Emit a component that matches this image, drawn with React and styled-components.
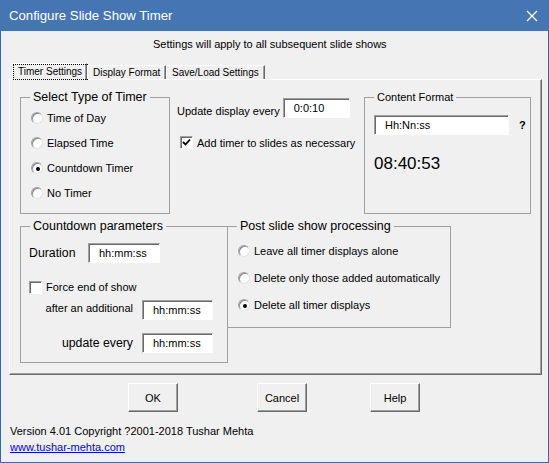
import React from 'react';
import styled, { createGlobalStyle, css } from 'styled-components';

const GlobalStyle = createGlobalStyle`
  html, body {
    margin: 0;
    padding: 0;
    background: #f0f0f0;
  }
  body {
    font-family: "Liberation Sans", Arial, sans-serif;
    font-size: 11px;
    color: #000;
  }
`;

const Window = styled.div`
  width: 549px;
  height: 463px;
  box-sizing: border-box;
  border: 1px solid #2f6db8;
  border-top: none;
  background: #f0f0f0;
  display: flex;
  flex-direction: column;
`;

const TitleBar = styled.div`
  height: 31px;
  margin: 0 -1px;
  padding: 0 11px 0 9px;
  background: #4675b3;
  color: #fff;
  font-size: 13.2px;
  display: flex;
  align-items: center;
  justify-content: space-between;
`;

const Body = styled.div`
  flex: 1;
  padding: 0 6px 0 8px;
  display: flex;
  flex-direction: column;
`;

const Subtitle = styled.div`
  margin-top: 7px;
  padding-left: 144px;
  line-height: 13px;
`;

const TabStrip = styled.div`
  margin-top: 12px;
  padding-left: 3px;
  height: 16px;
  display: flex;
  align-items: flex-end;
  position: relative;
  z-index: 1;
`;

const Tab = styled.div`
  box-sizing: border-box;
  width: ${p => p.$w}px;
  height: ${p => (p.$active ? 17 : 14)}px;
  margin-bottom: ${p => (p.$active ? -1 : 0)}px;
  background: #f0f0f0;
  border-top: 1px solid #fff;
  border-left: 1px solid #fff;
  border-right: 1px solid #696969;
  box-shadow: inset -1px 0 0 #a0a0a0;
  display: flex;
  align-items: center;
  padding-left: ${p => (p.$active ? 1 : 5)}px;
  font-size: 10px;
  line-height: 12px;
  white-space: nowrap;
`;

const FocusText = styled.span`
  outline: 1px dotted #000;
  padding: 1px 5px 1px 4px;
`;

const Panel = styled.div`
  box-sizing: border-box;
  height: 296px;
  background: #f0f0f0;
  border-top: 1px solid #fff;
  border-left: 1px solid #fff;
  border-right: 1px solid #696969;
  border-bottom: 1px solid #696969;
  box-shadow: inset -1px -1px 0 #a0a0a0;
  padding: 10px 0 0 10px;
  display: flex;
  flex-direction: column;
`;

const Row = styled.div`
  display: flex;
  align-items: flex-start;
  margin-top: ${p => p.$mt || 0}px;
`;

const Group = styled.fieldset`
  box-sizing: border-box;
  margin: 0 0 0 ${p => p.$ml || 0}px;
  padding: 0;
  width: ${p => p.$w}px;
  height: ${p => p.$h}px;
  min-width: 0;
  border: 1px solid #a0a0a0;
`;

const Legend = styled.legend`
  margin-left: 9px;
  padding: 0 3px;
  line-height: 15px;
  font-size: ${p => (p.$small ? 11 : 12.5)}px;
`;

const Inner = styled.div`
  padding: ${p => p.$pad};
  display: flex;
  flex-direction: column;
`;

const Stack = styled.div`
  display: flex;
  flex-direction: column;
  gap: ${p => p.$gap}px;
`;

const Option = styled.label`
  height: 18px;
  display: flex;
  align-items: center;
  gap: 4px;
`;

const Radio = styled.span`
  width: 12px;
  height: 12px;
  box-sizing: border-box;
  border-radius: 50%;
  background: #fff;
  border: 1px solid;
  border-color: #a0a0a0 #e3e3e3 #e3e3e3 #a0a0a0;
  box-shadow: inset 1px 1px 0 #8a8a8a;
  display: flex;
  align-items: center;
  justify-content: center;
  flex-shrink: 0;
  ${p => p.$checked && css`
    &::after {
      content: '';
      width: 4px;
      height: 4px;
      border-radius: 50%;
      background: #000;
      margin: 1px 0 0 1px;
    }
  `}
`;

const Box = styled.span`
  width: 13px;
  height: 13px;
  box-sizing: border-box;
  background: #fff;
  border: 1px solid;
  border-color: #a0a0a0 #fff #fff #a0a0a0;
  box-shadow: inset 1px 1px 0 #696969;
  display: flex;
  align-items: center;
  justify-content: center;
  flex-shrink: 0;
`;

const Field = styled.input`
  box-sizing: border-box;
  width: ${p => p.$w}px;
  height: 20px;
  margin: 0;
  padding: 0 0 0 10px;
  font: inherit;
  font-size: 11px;
  color: #000;
  background: #fff;
  border: 1px solid;
  border-color: #a0a0a0 #fff #fff #a0a0a0;
  box-shadow: inset 1px 1px 0 #696969;
  outline: none;
`;

const Middle = styled.div`
  width: 187px;
  margin-left: 7px;
  padding-top: 8px;
  display: flex;
  flex-direction: column;
`;

const UpdateLine = styled.div`
  display: flex;
  align-items: center;
  gap: 3px;
`;

const UpdateLabel = styled.span`
  margin-top: 5px;
`;

const CheckLine = styled.label`
  margin: 18px 0 0 3px;
  display: flex;
  align-items: center;
  gap: 4px;
`;

const FormatLine = styled.div`
  display: flex;
  align-items: center;
  gap: 10px;
`;

const Help = styled.span`
  font-weight: bold;
  font-size: 11px;
`;

const Clock = styled.div`
  margin-top: 19px;
  font-size: 17px;
  line-height: 20px;
`;

const ParamRow = styled.div`
  display: flex;
  align-items: center;
  margin-top: ${p => p.$mt || 0}px;
`;

const ParamLabel = styled.span`
  width: ${p => p.$w}px;
  text-align: ${p => p.$align || 'left'};
  padding-right: ${p => (p.$align === 'right' ? 9 : 0)}px;
  box-sizing: border-box;
  font-size: ${p => (p.$big ? 12.3 : 11)}px;
  margin-top: ${p => p.$lift || 0}px;
`;

const ButtonRow = styled.div`
  display: flex;
  margin-top: 8px;
  padding-left: 119px;
`;

const Button = styled.button`
  box-sizing: border-box;
  width: 50px;
  height: 29px;
  margin: 0 0 0 ${p => p.$ml || 0}px;
  padding: 0;
  font: inherit;
  font-size: 11px;
  color: #000;
  background: #f0f0f0;
  border: 1px solid;
  border-color: #fff #696969 #696969 #fff;
  box-shadow: inset -1px -1px 0 #a0a0a0;
`;

const Footer = styled.div`
  margin-top: 12px;
  padding-left: 1px;
  display: flex;
  flex-direction: column;
  gap: 2px;
  line-height: 14px;
`;

const Link = styled.a`
  color: #0000ff;
  text-decoration: underline;
`;

const CloseIcon = () => (
  <svg width="12" height="12" viewBox="0 0 12 12">
    <path d="M1 1 L11 11 M11 1 L1 11" stroke="#fff" strokeWidth="1.2" fill="none" />
  </svg>
);

const Check = () => (
  <svg width="9" height="9" viewBox="0 0 9 9">
    <path d="M1 4 L3.5 6.5 L8 1.5" stroke="#000" strokeWidth="1.8" fill="none" />
  </svg>
);

export default function App() {
  return (
    <>
      <GlobalStyle />
      <Window>
        <TitleBar>
          <span>Configure Slide Show Timer</span>
          <CloseIcon />
        </TitleBar>
        <Body>
          <Subtitle>Settings will apply to all subsequent slide shows</Subtitle>
          <TabStrip>
            <Tab $w={75} $active><FocusText>Timer Settings</FocusText></Tab>
            <Tab $w={79}>Display Format</Tab>
            <Tab $w={99}>Save/Load Settings</Tab>
          </TabStrip>
          <Panel>
            <Row>
              <Group $w={150} $h={124}>
                <Legend>Select Type of Timer</Legend>
                <Inner $pad="4px 0 0 10px">
                  <Stack $gap={7}>
                    <Option><Radio />Time of Day</Option>
                    <Option><Radio />Elapsed Time</Option>
                    <Option><Radio $checked />Countdown Timer</Option>
                    <Option><Radio />No Timer</Option>
                  </Stack>
                </Inner>
              </Group>
              <Middle>
                <UpdateLine>
                  <UpdateLabel>Update display every</UpdateLabel>
                  <Field $w={67} readOnly defaultValue="0:0:10" />
                </UpdateLine>
                <CheckLine>
                  <Box><Check /></Box>
                  Add timer to slides as necessary
                </CheckLine>
              </Middle>
              <Group $w={167} $h={124}>
                <Legend $small>Content Format</Legend>
                <Inner $pad="10px 0 0 9px">
                  <FormatLine>
                    <Field $w={135} readOnly defaultValue="Hh:Nn:ss" />
                    <Help>?</Help>
                  </FormatLine>
                  <Clock>08:40:53</Clock>
                </Inner>
              </Group>
            </Row>
            <Row $mt={5}>
              <Group $w={208} $h={144}>
                <Legend>Countdown parameters</Legend>
                <Inner $pad="9px 0 0 8px">
                  <ParamRow>
                    <ParamLabel $w={59} $big>Duration</ParamLabel>
                    <Field $w={72} readOnly defaultValue="hh:mm:ss" />
                  </ParamRow>
                  <ParamRow $mt={15}>
                    <Option as="div">
                      <Box />
                      Force end of show
                    </Option>
                  </ParamRow>
                  <ParamRow $mt={4}>
                    <ParamLabel $w={113} $align="right" $lift={-5}>after an additional</ParamLabel>
                    <Field $w={71} readOnly defaultValue="hh:mm:ss" />
                  </ParamRow>
                  <ParamRow $mt={13}>
                    <ParamLabel $w={113} $align="right" $big>update every</ParamLabel>
                    <Field $w={71} readOnly defaultValue="hh:mm:ss" />
                  </ParamRow>
                </Inner>
              </Group>
              <Group $w={224} $h={109} $ml={-1}>
                <Legend>Post slide show processing</Legend>
                <Inner $pad="8px 0 0 10px">
                  <Stack $gap={9}>
                    <Option><Radio />Leave all timer displays alone</Option>
                    <Option><Radio />Delete only those added automatically</Option>
                    <Option><Radio $checked />Delete all timer displays</Option>
                  </Stack>
                </Inner>
              </Group>
            </Row>
          </Panel>
          <ButtonRow>
            <Button>OK</Button>
            <Button $ml={79}>Cancel</Button>
            <Button $ml={63}>Help</Button>
          </ButtonRow>
          <Footer>
            <span>Version 4.01 Copyright ?2001-2018 Tushar Mehta</span>
            <Link href="#">www.tushar-mehta.com</Link>
          </Footer>
        </Body>
      </Window>
    </>
  );
}
